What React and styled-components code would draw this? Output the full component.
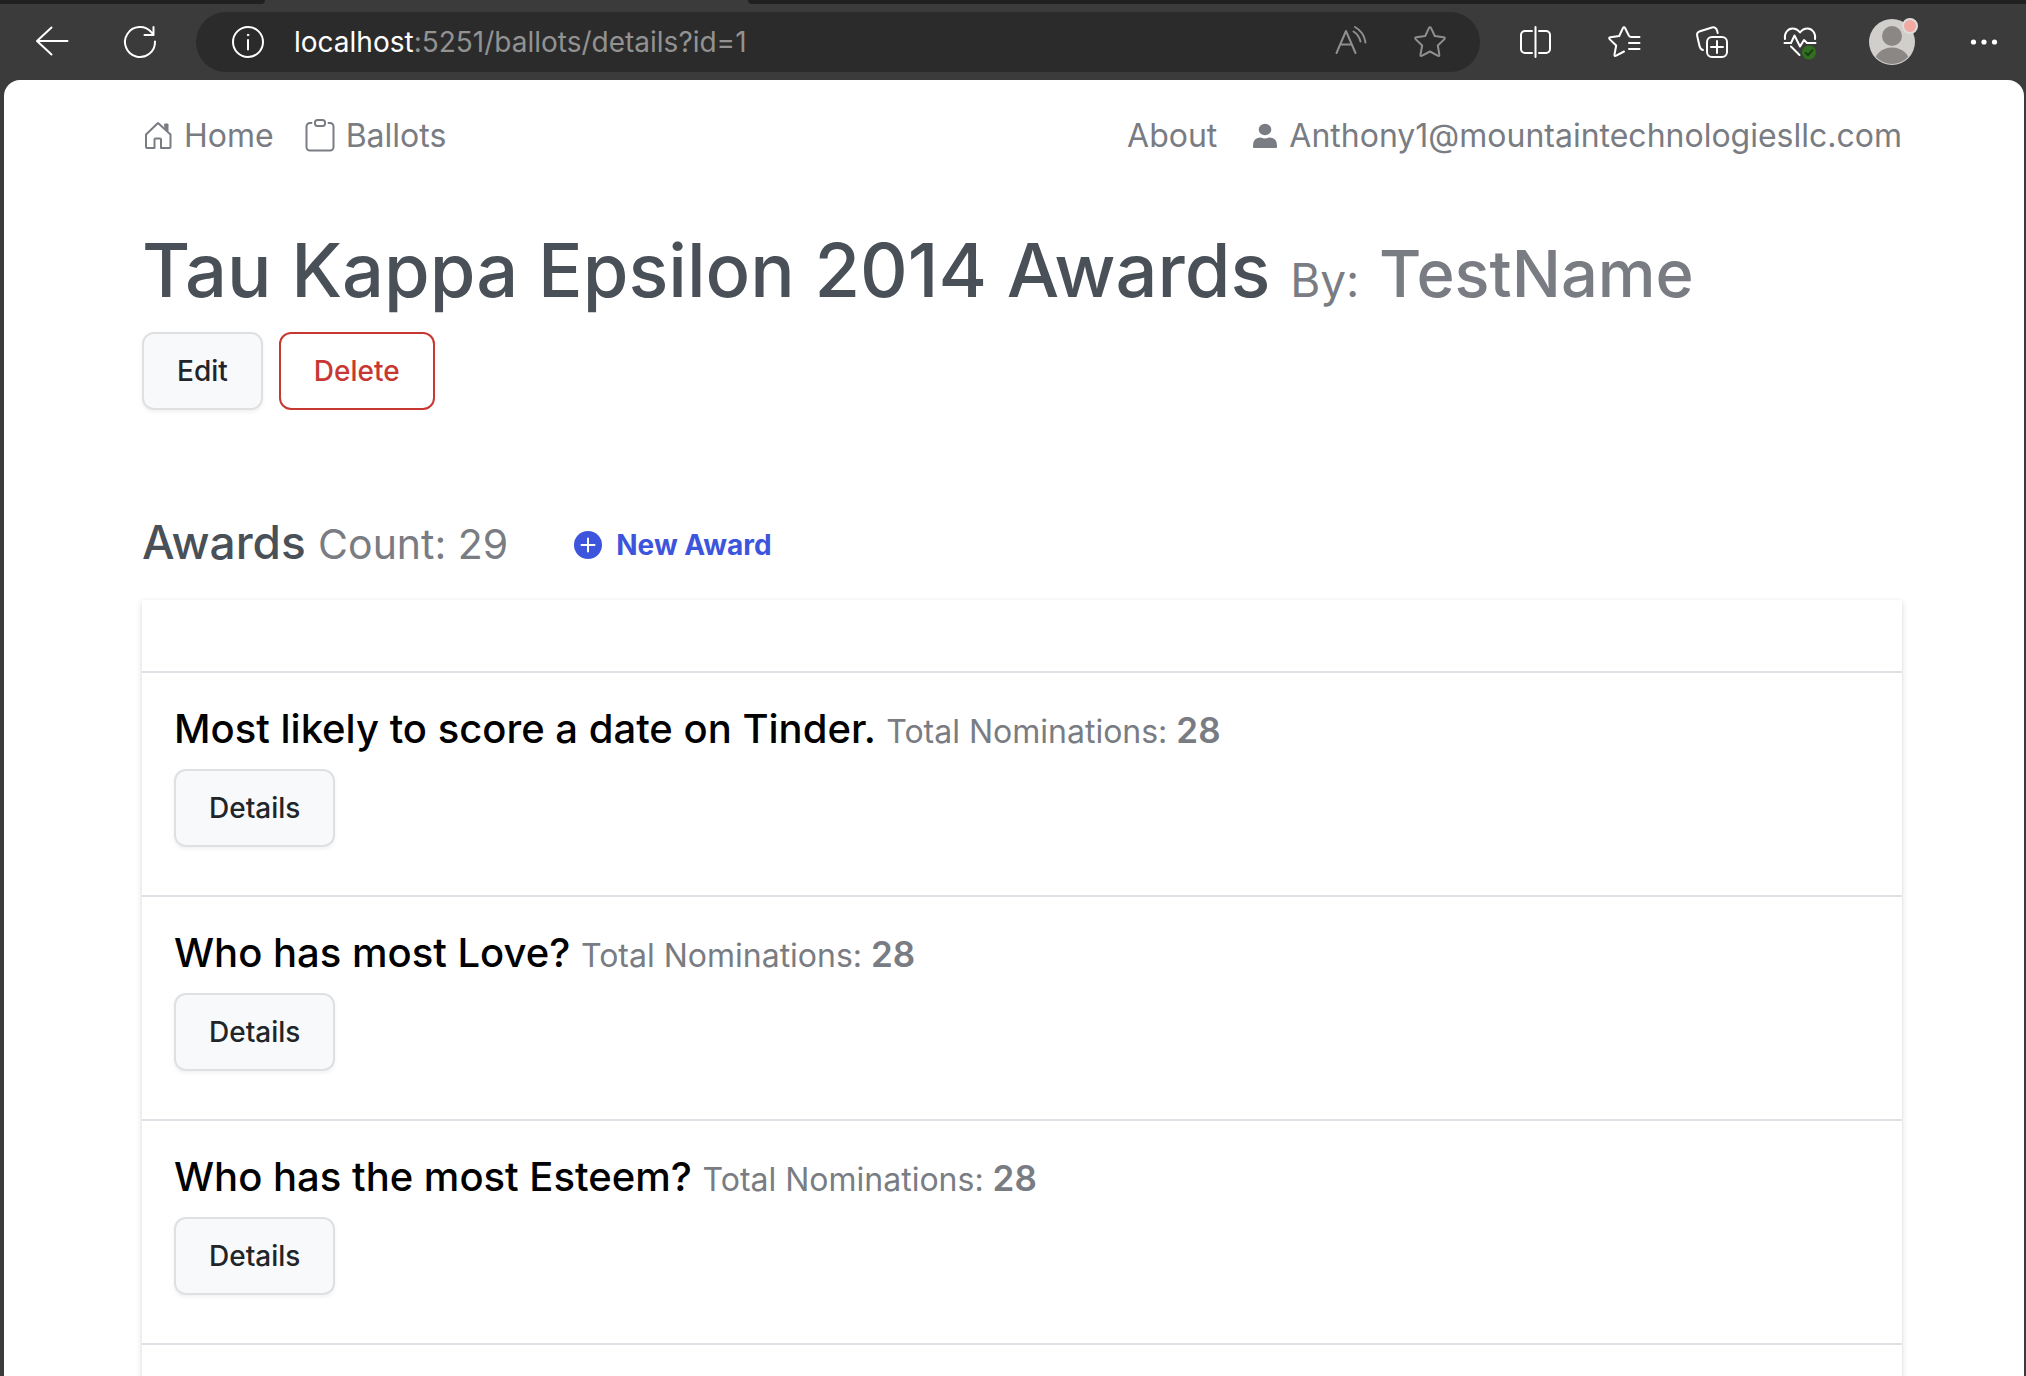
import React from "react";
import styled, { createGlobalStyle } from "styled-components";

const Global = createGlobalStyle`
  *, *::before, *::after { box-sizing: border-box; }
  body { margin: 0; background: #3b3b3b; font-family: Inter, "Liberation Sans", sans-serif; overflow: hidden; }
  button, input { font-family: inherit; }
`;

const Window = styled.div`
  height: 100vh;
  display: flex;
  flex-direction: column;
  overflow: hidden;
`;

const TabEdge = styled.div`
  flex: none;
  display: flex;
  justify-content: space-between;
  height: 4px;
  background: #3b3b3b;
`;

const TabGap = styled.div`
  height: 4px;
  background: #202020;
  width: ${(p) => p.$width};
  border-radius: ${(p) => (p.$first ? "0 0 6px 0" : "0 0 0 6px")};
`;

const Toolbar = styled.header`
  flex: none;
  display: flex;
  align-items: center;
  height: 76px;
  padding: 0 22px 0 32px;
`;

const IconButton = styled.button`
  display: grid;
  place-items: center;
  width: ${(p) => (p.$wide ? "48px" : "40px")};
  height: 48px;
  margin: 0;
  padding: 0;
  border: 0;
  background: none;
  color: ${(p) => (p.$muted ? "#8f8f8f" : "#fff")};
  svg { display: block; overflow: visible; }
`;

const NavButtons = styled.div`
  display: flex;
  gap: 48px;
  margin-right: 36px;
`;

const AddressBar = styled.div`
  flex: 1;
  display: flex;
  align-items: center;
  height: 60px;
  padding: 0 30px 0 32px;
  border-radius: 30px;
  background: #2b2b2b;
`;

const Url = styled.div`
  flex: 1;
  padding-left: 26px;
  font-size: 28px;
  line-height: 40px;
  color: #929292;
  b { font-weight: 400; color: #fff; }
`;

const AddressActions = styled.div`
  display: flex;
  gap: 40px;
`;

const Actions = styled.div`
  display: flex;
  gap: 48px;
  margin-left: 36px;
`;

const Page = styled.main`
  flex: 1;
  min-height: 0;
  overflow: hidden;
  margin: 0 2px 0 4px;
  padding: 32px 122px 0 138px;
  border-radius: 16px 16px 0 0;
  background: #fff;
`;

const Nav = styled.nav`
  display: flex;
  justify-content: space-between;
`;

const NavGroup = styled.div`
  display: flex;
  gap: 30px;
`;

const NavLink = styled.a`
  display: flex;
  align-items: center;
  gap: 10px;
  font-size: 32px;
  line-height: 48px;
  color: #797c82;
  text-decoration: none;
  svg { overflow: visible; }
`;

const Title = styled.h1`
  margin: 64px 0 0;
  font-size: 74px;
  line-height: 92px;
  font-weight: 500;
  color: #495057;
`;

const By = styled.small`
  font-size: ${(p) => (p.$name ? "65px" : "46px")};
  line-height: 1;
  font-weight: ${(p) => (p.$name ? 500 : 400)};
  color: #797c82;
`;

const Buttons = styled.div`
  display: flex;
  gap: 16px;
  margin-top: 16px;
`;

const Button = styled.button`
  height: 78px;
  padding: 0 33px;
  border: 2px solid ${(p) => (p.$danger ? "#c83832" : "#dee0e2")};
  border-radius: 12px;
  background: ${(p) => (p.$danger ? "#fff" : "#f8f9fb")};
  box-shadow: ${(p) => (p.$danger ? "none" : "0 2px 4px rgba(0, 0, 0, 0.06)")};
  color: ${(p) => (p.$danger ? "#c83832" : "#212529")};
  font-size: 28px;
  line-height: 42px;
  font-weight: 500;
`;

const SectionHead = styled.div`
  display: flex;
  align-items: baseline;
  gap: 66px;
  margin-top: 100px;
`;

const SectionTitle = styled.h2`
  margin: 0;
  font-size: 46px;
  line-height: 64px;
  font-weight: 500;
  color: #495057;
  small { font-size: 41px; line-height: 1; font-weight: 400; color: #797c82; }
`;

const NewAward = styled.a`
  display: flex;
  align-items: center;
  gap: 14px;
  font-size: 28px;
  line-height: 42px;
  font-weight: 700;
  color: #3d55dd;
  text-decoration: none;
`;

const Card = styled.section`
  margin-top: 26px;
  box-shadow: 0 2px 6px rgba(0, 0, 0, 0.16);
`;

const CardHead = styled.div`
  height: 71px;
`;

const List = styled.ul`
  margin: 0;
  padding: 0;
  list-style: none;
`;

const Row = styled.li`
  min-height: 224px;
  padding: 32px;
  border-top: 2px solid #dee2e6;
`;

const RowTitle = styled.h3`
  margin: 0;
  font-size: 40px;
  line-height: 48px;
  font-weight: 500;
  color: #000;
  small { font-size: 32px; line-height: 1; font-weight: 400; color: #797c82; }
  b { font-size: 35px; font-weight: 600; }
`;

const awards = ["Most likely to score a date on Tinder.", "Who has most Love?", "Who has the most Esteem?"];

const Stroke = ({ children }) => (
  <svg width="32" height="32" viewBox="0 0 32 32" fill="none" stroke="currentColor" strokeWidth="2" strokeLinecap="round" strokeLinejoin="round" aria-hidden="true">
    {children}
  </svg>
);

const star = "M14.8 2.300Q16 .300 17.200 2.300L20.800 10l8.800 1.300q2.200.4.6 2.100l-6.400 6.100 1.500 9q.2 2.100-1.700 1.200L16 25.500l-7.800 4.200q-1.900.9-1.700-1.200l1.700-9-6.400-6.100q-1.600-1.700.6-2.100L11.200 10z";

const HouseIcon = () => (
  <Stroke>
    <path d="M16 3L4 14.500V27q0 1 1 1h7.500v-8.500q0-1 1-1H18q1 0 1 1V28h8.500q1 0 1-1V14.500z" />
    <path d="M23 4h3v7l-3-3z" fill="currentColor" strokeWidth="1" />
  </Stroke>
);

const ClipboardIcon = () => (
  <Stroke>
    <path d="M7.500 3H6a3.500 3.500 0 0 0-3.500 3.500v20.500A3.500 3.500 0 0 0 6 30.500h20a3.500 3.500 0 0 0 3.500-3.500V6.500A3.500 3.500 0 0 0 26 3h-1.500" />
    <rect x="11" y="0" width="10" height="6" rx="2.500" />
  </Stroke>
);

const PersonIcon = () => (
  <svg width="32" height="32" viewBox="-6 -4 32 32" fill="currentColor" aria-hidden="true">
    <ellipse cx="12" cy="5.500" rx="6.300" ry="5.800" />
    <path d="M0 23v-1.500Q0 13.500 8 13.500q4 2 8 0 8 0 8 8V23q0 1-1 1H1q-1 0-1-1z" />
  </svg>
);

const Avatar = () => (
  <svg width="46" height="46" viewBox="0 0 46 46" aria-hidden="true">
    <clipPath id="face"><circle cx="23" cy="23" r="22" /></clipPath>
    <circle cx="23" cy="23" r="23" fill="#d0cfcb" />
    <g clipPath="url(#face)" fill="#8b8784">
      <circle cx="23" cy="17" r="10" />
      <ellipse cx="23" cy="45" rx="18" ry="16.500" />
    </g>
    <circle cx="41" cy="7" r="7" fill="#f1a9a1" stroke="#dedddb" strokeWidth="2" />
  </svg>
);

export default function App() {
  return (
    <Window>
      <Global />
      <TabEdge>
        <TabGap $width="13.1%" $first />
        <TabGap $width="63.1%" />
      </TabEdge>
      <Toolbar>
        <NavButtons>
          <IconButton aria-label="Back"><Stroke><path d="M31.500 15H1M15.500 1.500L1 15l14.500 13.500" /></Stroke></IconButton>
          <IconButton aria-label="Refresh"><Stroke><path d="M31 15.500a15 15 0 1 1-3.500-9.100l2 2.600M29.500 1v8h-9" /></Stroke></IconButton>
        </NavButtons>
        <AddressBar>
          <IconButton aria-label="Site information"><Stroke><circle cx="16" cy="16" r="15" /><path d="M16 14v9.500" /><circle cx="16" cy="9" r="0.800" fill="currentColor" strokeWidth="1" /></Stroke></IconButton>
          <Url><b>localhost</b>:5251/ballots/details?id=1</Url>
          <AddressActions>
            <IconButton $muted aria-label="Read aloud"><Stroke><path d="M2.500 27L12 5l9.500 22M6 18.500h12M19.500 5.500q5.500 3.500 7 10M21 1q9 5 10.500 15.500" /></Stroke></IconButton>
            <IconButton $muted aria-label="Favorite"><Stroke><path d={star} /></Stroke></IconButton>
          </AddressActions>
        </AddressBar>
        <Actions>
          <IconButton aria-label="Split screen"><Stroke><path d="M12 5H5a4 4 0 0 0-4 4v14a4 4 0 0 0 4 4h7M19 5h7a4 4 0 0 1 4 4v14a4 4 0 0 1-4 4h-7M15.500 1v30" /></Stroke></IconButton>
          <IconButton aria-label="Favorites"><Stroke><path d="M16 25.500l-7.800 4.200q-1.900.9-1.700-1.200l1.700-9-6.400-6.100q-1.600-1.700.6-2.100L11.200 10l3.600-7.700q1.200-2 2.400 0L20.500 9q.8 2 2.500 2h8.500M21 17h10.500M21 23h10.500" /></Stroke></IconButton>
          <IconButton aria-label="Collections"><Stroke><rect x="11" y="11" width="20" height="20" rx="5" /><path d="M21 15v12M15 21h12M7 24C4.500 23.500 4 22 3.500 20L1.200 10C.6 7.500 1.500 6 4 5.200L16 1.500C18.500.800 20.500 2 21.200 5l.5 2" /></Stroke></IconButton>
          <IconButton aria-label="Browser essentials"><Stroke><path d="M1 13C0 7 4 2.500 8.500 2.500q4.500 0 7.500 4 3-4 7.500-4C28 2.500 32 7 31 13M.5 17h6.500L10.500 9.500 16 20.500l4-6.500 3 3h8.500M7 20.500l8.500 8.500" /><circle cx="25" cy="26.500" r="7" fill="#2f6f1f" stroke="none" /><path d="M21.800 27l2.200 2.200 4.500-5" stroke="#1c3a16" /></Stroke></IconButton>
          <IconButton $wide aria-label="Profile"><Avatar /></IconButton>
          <IconButton aria-label="Settings and more"><Stroke><g fill="currentColor" stroke="none"><circle cx="5.500" cy="16" r="2.600" /><circle cx="16" cy="16" r="2.600" /><circle cx="26.500" cy="16" r="2.600" /></g></Stroke></IconButton>
        </Actions>
      </Toolbar>
      <Page>
        <Nav>
          <NavGroup>
            <NavLink href="#home"><HouseIcon />Home</NavLink>
            <NavLink href="#ballots"><ClipboardIcon />Ballots</NavLink>
          </NavGroup>
          <NavGroup>
            <NavLink href="#about">About</NavLink>
            <NavLink href="#account"><PersonIcon />Anthony1@mountaintechnologiesllc.com</NavLink>
          </NavGroup>
        </Nav>
        <Title>Tau Kappa Epsilon 2014 Awards <By>By:</By> <By $name>TestName</By></Title>
        <Buttons>
          <Button>Edit</Button>
          <Button $danger>Delete</Button>
        </Buttons>
        <SectionHead>
          <SectionTitle>Awards <small>Count: 29</small></SectionTitle>
          <NewAward href="#new"><svg width="28" height="28" viewBox="0 0 28 28" aria-hidden="true"><circle cx="14" cy="14" r="14" fill="currentColor" /><path d="M14 7.500v13M7.500 14h13" stroke="#fff" strokeWidth="2" strokeLinecap="round" /></svg>New Award</NewAward>
        </SectionHead>
        <Card>
          <CardHead />
          <List>
            {awards.map((name) => (
              <Row key={name}>
                <RowTitle>{name} <small>Total Nominations: <b>28</b></small></RowTitle>
                <Buttons><Button>Details</Button></Buttons>
              </Row>
            ))}
            <Row />
          </List>
        </Card>
      </Page>
    </Window>
  );
}
